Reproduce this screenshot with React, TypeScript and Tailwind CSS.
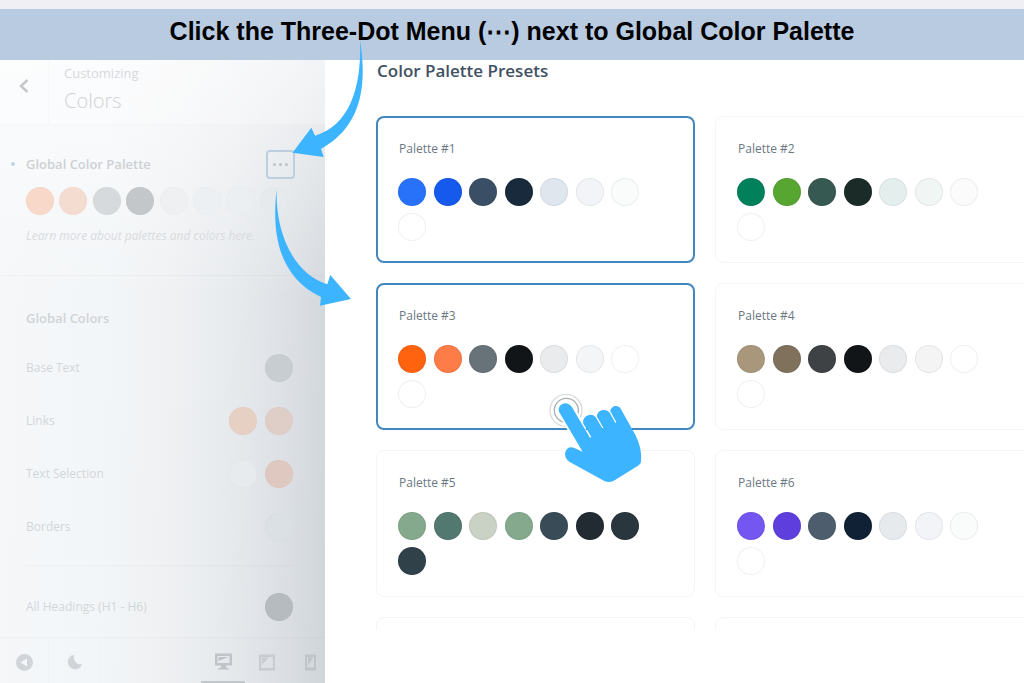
import type { ReactNode } from 'react';

type Palette = { id: number; name?: string; colors: string[]; selected?: boolean };

const palettes: Palette[] = [
  {
    id: 1,
    name: 'Palette #1',
    selected: true,
    colors: ['#2872fa', '#1559ed', '#3a4f66', '#192a3d', '#dfe6ed', '#f2f4f7', '#fafcfb', '#ffffff'],
  },
  {
    id: 2,
    name: 'Palette #2',
    colors: ['#00815c', '#56a631', '#365951', '#1b2c28', '#e4eeed', '#f1f5f4', '#fbfbfb', '#ffffff'],
  },
  {
    id: 3,
    name: 'Palette #3',
    selected: true,
    colors: ['#ff6310', '#fd7c47', '#687279', '#111518', '#e9ebec', '#f3f5f7', '#ffffff', '#ffffff'],
  },
  {
    id: 4,
    name: 'Palette #4',
    colors: ['#a8977b', '#7f715c', '#3f4245', '#111518', '#e9ebec', '#f4f4f5', '#ffffff', '#ffffff'],
  },
  {
    id: 5,
    name: 'Palette #5',
    colors: ['#84a98c', '#52796f', '#cad2c5', '#84a98c', '#384b56', '#212b31', '#29363d', '#314149'],
  },
  {
    id: 6,
    name: 'Palette #6',
    colors: ['#7456f1', '#5e3fde', '#4d5d6d', '#102136', '#e6eaed', '#f3f4f7', '#fafcfb', '#ffffff'],
  },
  { id: 7, colors: [] },
  { id: 8, colors: [] },
];

const globalColors = ['#f8d8c9', '#f4dcd1', '#d6dadd', '#c3c7ca', '#eef0f2', '#edf0f2', '#eceff1', '#e6eaec'];

const colorRows: { label: string; colors: string[] }[] = [
  { label: 'Base Text', colors: ['#c8cdd1'] },
  { label: 'Links', colors: ['#e6cfc3', '#dfcdc7'] },
  { label: 'Text Selection', colors: ['#e7ebed', '#dec8bf'] },
  { label: 'Borders', colors: ['#dbe0e4'] },
];

function Dot({ color, label }: { color: string; label: string }) {
  return (
    <button
      type="button"
      aria-label={label}
      className="block size-7 rounded-full border border-black/1"
      style={{ backgroundColor: color }}
    />
  );
}

function ColorRow({ label, colors }: { label: string; colors: string[] }) {
  return (
    <div className="flex h-[53px] items-center justify-between text-[#d2d6d9]">
      <span>{label}</span>
      <div className="flex gap-2">
        {colors.map((color, i) => (
          <Dot key={i} color={color} label={`${label} color ${i + 1}`} />
        ))}
      </div>
    </div>
  );
}

function PaletteCard({ palette }: { palette: Palette }) {
  const frame = palette.selected
    ? 'border-2 border-[#4386bd] px-5 pt-5'
    : 'border border-[#f4f5f6] px-[21px] pt-[21px]';
  return (
    <button
      type="button"
      aria-pressed={!!palette.selected}
      className={`flex h-[147px] flex-col items-start rounded-lg bg-white text-left ${frame}`}
    >
      <span className="pl-px text-xs leading-[22px] text-[#6b7883]">{palette.name}</span>
      <span className="mt-[18px] grid w-[249px] grid-cols-7 gap-y-[7px]">
        {palette.colors.map((color, i) => (
          <span
            key={i}
            className="size-7 rounded-full border border-black/6"
            style={{ backgroundColor: color }}
          />
        ))}
      </span>
    </button>
  );
}

function FooterButton({ label, className, children }: { label: string; className: string; children: ReactNode }) {
  return (
    <button type="button" aria-label={label} className={`flex items-center justify-center pt-[3px] ${className}`}>
      {children}
    </button>
  );
}

function Sidebar() {
  return (
    <aside className="flex w-[325px] shrink-0 flex-col bg-[linear-gradient(to_bottom,rgba(255,255,255,0.6),rgba(255,255,255,0)_240px),linear-gradient(92deg,#f5f7f9_0%,#f3f6f8_32%,#eff1f3_52%,#e8ebee_68%,#dee2e6_84%,#d0d5da_100%)] text-xs">
      <div className="flex h-[65px] shrink-0 border-b border-black/2 bg-white/25">
        <button
          type="button"
          aria-label="Back"
          className="flex w-[49px] items-center justify-center border-r border-black/2 pb-3"
        >
          <svg width="10" height="14" viewBox="0 0 10 14" fill="none" stroke="#c3c8cb" strokeWidth="2.400">
            <path d="M8.500 1 2 7l6.500 6" />
          </svg>
        </button>
        <div className="pl-[15px] pt-1">
          <p className="text-[13px] leading-[18px] text-[#d5d9dc]">Customizing</p>
          <h2 className="text-xl leading-[38px] font-light text-[#cfd3d6]">Colors</h2>
        </div>
      </div>

      <section className="h-[151px] shrink-0 border-b border-black/2 pl-[26px] pr-[30px] pt-[25px]">
        <div className="relative flex items-center justify-between">
          <span className="absolute -left-[15px] top-3 size-1 rounded-full bg-[#bdd3e6]" />
          <h3 className="text-[13px] font-semibold text-[#cdd1d4]">Global Color Palette</h3>
          <button
            type="button"
            aria-label="Palette menu"
            className="flex size-[29px] items-center justify-center gap-[3px] rounded-sm border-2 border-[#bdcfde]"
          >
            <span className="size-[3px] rounded-full bg-[#bfc4c8]" />
            <span className="size-[3px] rounded-full bg-[#bfc4c8]" />
            <span className="size-[3px] rounded-full bg-[#bfc4c8]" />
          </button>
        </div>
        <div className="mt-2 grid w-[267px] grid-cols-8">
          {globalColors.map((color, i) => (
            <Dot key={i} color={color} label={`Global color ${i + 1}`} />
          ))}
        </div>
        <p className="mt-[13px] leading-4 whitespace-nowrap text-[#d8dbde] italic">
          Learn more about palettes and colors here.
        </p>
      </section>

      <section className="flex-1 pl-[26px] pr-8">
        <h3 className="pt-8 pb-[13px] text-[13px] leading-5 font-semibold text-[#d0d4d7]">Global Colors</h3>
        {colorRows.map((row) => (
          <ColorRow key={row.label} {...row} />
        ))}
        <div className="mt-3 border-t border-black/2 pt-[14px]">
          <ColorRow label="All Headings (H1 - H6)" colors={['#b6bbbf']} />
        </div>
      </section>

      <footer className="flex h-[46px] shrink-0 border-t border-black/2 text-[#d1d5d9]">
        <FooterButton label="Hide controls" className="w-[49px] border-r border-black/1">
          <svg width="17" height="17" viewBox="0 0 17 17">
            <circle cx="8.500" cy="8.500" r="8.500" fill="currentColor" />
            <path d="M11 4.500v8L4.500 8.500z" fill="#f5f7f9" />
          </svg>
        </FooterButton>
        <FooterButton label="Dark mode" className="w-[52px] border-r border-black/1">
          <svg width="16" height="16" viewBox="0 0 16 16" fill="currentColor">
            <path d="M7 .800A7.300 7.300 0 1 0 15.200 9.500C11 11.800 6.200 8 7 .800z" />
          </svg>
        </FooterButton>
        <div className="flex flex-1 justify-end">
          <FooterButton label="Desktop preview" className="w-11 border-b-2 border-[#c3c8cc] text-[#bfc4c8]">
            <svg width="17" height="17" viewBox="0 0 17 17" fill="currentColor">
              <path fillRule="evenodd" d="M0 .500h17v12h-6v2l3 1v1H3v-1l3-1v-2H0zM2.500 3v7h12V3z" />
              <path d="M3.500 4h10L3.500 8z" />
            </svg>
          </FooterButton>
          <FooterButton label="Tablet preview" className="w-11 text-[#c7ccd0]">
            <svg width="16" height="17" viewBox="0 0 16 17" fill="currentColor">
              <path fillRule="evenodd" d="M0 .500h16v16H0zM2.200 3v11h11.600V3z" />
              <path d="M3 3.500h7l-7 7z" />
            </svg>
          </FooterButton>
          <FooterButton label="Phone preview" className="w-9 pl-[7px] text-[#bec4c8]">
            <svg width="11" height="17" viewBox="0 0 11 17" fill="currentColor">
              <path fillRule="evenodd" d="M0 .500h11v16H0zM2 3v10.500h7V3z" />
              <path d="M3 3.500h5l-5 8z" />
            </svg>
          </FooterButton>
        </div>
      </footer>
    </aside>
  );
}

export default function App() {
  return (
    <div className="relative flex h-screen flex-col overflow-hidden bg-white font-['Open_Sans',sans-serif]">
      <header className="h-[60px] shrink-0 border-t-9 border-[#f0eff3] bg-[#b9cbe1] pt-1 text-center font-['Liberation_Sans',sans-serif]">
        <h1 className="text-[25px] leading-9 font-bold text-black">
          Click the Three-Dot Menu (⋯) next to Global Color Palette
        </h1>
      </header>

      <div className="flex min-h-0 flex-1">
        <Sidebar />
        <main className="flex min-w-0 flex-1 flex-col pb-[53px] pl-[51px]">
          <h2 className="shrink-0 pl-px text-[17px] leading-[22px] font-semibold text-[#3f5163]">Color Palette Presets</h2>
          <div className="-mr-[10px] mt-[34px] grid min-h-0 flex-1 grid-cols-2 content-start gap-5 overflow-hidden">
            {palettes.map((palette) => (
              <PaletteCard key={palette.id} palette={palette} />
            ))}
          </div>
        </main>
      </div>

      <svg
        className="pointer-events-none absolute left-[260px] top-[30px]"
        width="110"
        height="290"
        viewBox="260 30 110 290"
        fill="#3cb4ff"
        aria-hidden="true"
      >
        <path d="M360 40C366 78 366 124 321 149L323.700 157 292.500 152.700 311.300 127.700 315 135.700C348 126 362 90 360 40Z" />
        <path d="M276.700 189C272 228 276 276 321 297L320 305.700 351 299 330.300 275 327.300 284.300C296 275 275 236 276.700 189Z" />
      </svg>

      <svg
        className="pointer-events-none absolute left-[547px] top-[390px]"
        width="100"
        height="95"
        viewBox="531 360 300 285"
        fill="none"
        aria-hidden="true"
      >
        <circle cx="588" cy="421" r="48" fill="#fff" stroke="#d9dbdd" strokeWidth="4" />
        <circle cx="589" cy="421" r="36" stroke="#a9adb1" strokeWidth="4" />
        <path d="M586 417 622 478" stroke="#fff" strokeWidth="52" strokeLinecap="round" />
        <path
          fill="#3cb4ff"
          d="M568 427C558 405 590 386 606 412L660 503 664 501 640 461C634 440 665 424 678 443L697 475 700 473 681 440C680 420 708 412 720 430L736 459 739 457 721 424C722 406 746 402 753 418L790 484C808 515 816 545 813 575 812 580 808 584 804 587L735 630C725 637 714 637 703 633L598 575C578 562 584 536 600 532 612 530 622 540 638 545Z"
        />
      </svg>
    </div>
  );
}
